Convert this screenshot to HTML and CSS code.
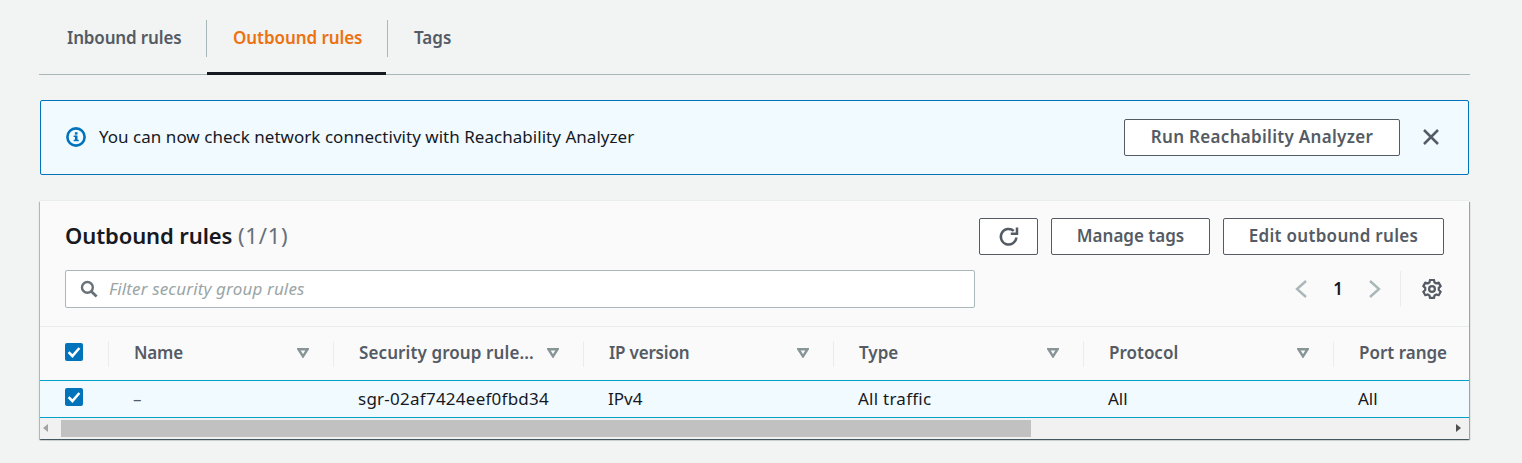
FILE: index.html
```html
<!DOCTYPE html>
<html lang="en">
<head>
<meta charset="utf-8">
<title>Outbound rules</title>
<link rel="stylesheet" href="styles.css">
</head>
<body>
<main class="page">
  <nav class="tabs">
    <a class="tab">Inbound rules</a>
    <a class="tab tab-active">Outbound rules</a>
    <a class="tab tab-last">Tags</a>
  </nav>

  <section class="banner">
    <svg class="info-icon" viewBox="0 0 20 20" width="20" height="20"><circle cx="10" cy="10" r="8.6" fill="none" stroke="#0073bb" stroke-width="2.6"/><rect x="8.9" y="8.6" width="2.6" height="5.2" fill="#0073bb"/><rect x="7.6" y="8.6" width="3" height="1.4" fill="#0073bb"/><rect x="7.6" y="12.8" width="5.2" height="1.4" fill="#0073bb"/><rect x="8.9" y="5.2" width="2.6" height="2.4" fill="#0073bb"/></svg>
    <span class="banner-text">You can now check network connectivity with Reachability Analyzer</span>
    <button class="btn btn-run"><span class="btn-label">Run Reachability Analyzer</span></button>
    <svg class="close-icon" viewBox="0 0 18 18" width="18" height="18"><path d="M2 2 16 16M16 2 2 16" fill="none" stroke="#545b64" stroke-width="2.5"/></svg>
  </section>

  <section class="card">
    <header class="card-head">
      <div class="head-row">
        <h2 class="title">Outbound rules <span class="count">(1/1)</span></h2>
        <div class="actions">
          <button class="btn btn-icon"><svg viewBox="0 0 22 22" width="22" height="22"><path d="M18.4 11.5A7.8 7.8 0 1 1 15.8 4.9" fill="none" stroke="#545b64" stroke-width="2.5"/><path d="M19 1.6V7.8H12.8" fill="none" stroke="#545b64" stroke-width="2.5"/></svg></button>
          <button class="btn btn-tags"><span class="btn-label">Manage tags</span></button>
          <button class="btn btn-edit"><span class="btn-label">Edit outbound rules</span></button>
        </div>
      </div>
      <div class="filter-row">
        <div class="filter">
          <svg viewBox="0 0 18 18" width="18" height="18"><circle cx="7.4" cy="7.4" r="5.4" fill="none" stroke="#687078" stroke-width="2.4"/><path d="M11.4 11.4 16.6 16.6" stroke="#687078" stroke-width="2.8"/></svg>
          <span class="placeholder">Filter security group rules</span>
        </div>
        <div class="pager">
          <svg class="chev" viewBox="0 0 12 18" width="12" height="18"><path d="M11 1 2 9l9 8" fill="none" stroke="#aab7b8" stroke-width="2.4"/></svg>
          <span class="page-num">1</span>
          <svg class="chev" viewBox="0 0 12 18" width="12" height="18"><path d="M1 1l9 8-9 8" fill="none" stroke="#aab7b8" stroke-width="2.4"/></svg>
          <span class="pager-sep"></span>
          <svg class="gear" viewBox="1 1 18 18" width="20" height="20"><path d="M8.2 1.9h3.6l.5 2.2 1.6.9 2.1-.7 1.8 3.1-1.7 1.6v1.9l1.7 1.6-1.8 3.1-2.1-.7-1.6.9-.5 2.2H8.2l-.5-2.2-1.6-.9-2.1.7-1.8-3.1 1.7-1.6V9L2.2 7.4 4 4.3l2.1.7 1.6-.9z" fill="none" stroke="#545b64" stroke-width="2" stroke-linejoin="round"/><circle cx="10" cy="10" r="2.6" fill="none" stroke="#545b64" stroke-width="2"/></svg>
        </div>
      </div>
    </header>

    <div class="table-wrap">
      <div class="row row-head">
        <div class="cell cell-check"><span class="check"><svg viewBox="0 0 18 18" width="18" height="18"><path d="M3.6 9.2 7.4 13l7-8" fill="none" stroke="#fff" stroke-width="2.6"/></svg></span></div>
        <div class="cell col-name"><span class="th th-tight">Name</span><svg class="sort" viewBox="0 0 12 10" width="12" height="10"><path d="M1.4 1.2h9.2L6 8.4z" fill="none" stroke="#879596" stroke-width="2.4"/></svg></div>
        <div class="cell col"><span class="th th-wide">Security group rule...</span><svg class="sort" viewBox="0 0 12 10" width="12" height="10"><path d="M1.4 1.2h9.2L6 8.4z" fill="none" stroke="#879596" stroke-width="2.4"/></svg></div>
        <div class="cell col"><span class="th th-tight">IP version</span><svg class="sort" viewBox="0 0 12 10" width="12" height="10"><path d="M1.4 1.2h9.2L6 8.4z" fill="none" stroke="#879596" stroke-width="2.4"/></svg></div>
        <div class="cell col"><span class="th">Type</span><svg class="sort" viewBox="0 0 12 10" width="12" height="10"><path d="M1.4 1.2h9.2L6 8.4z" fill="none" stroke="#879596" stroke-width="2.4"/></svg></div>
        <div class="cell col"><span class="th">Protocol</span><svg class="sort" viewBox="0 0 12 10" width="12" height="10"><path d="M1.4 1.2h9.2L6 8.4z" fill="none" stroke="#879596" stroke-width="2.4"/></svg></div>
        <div class="cell col"><span class="th">Port range</span></div>
      </div>
      <div class="row row-body">
        <div class="cell cell-check"><span class="check"><svg viewBox="0 0 18 18" width="18" height="18"><path d="M3.6 9.2 7.4 13l7-8" fill="none" stroke="#fff" stroke-width="2.6"/></svg></span></div>
        <div class="cell col-name"><span class="td td-dash">–</span></div>
        <div class="cell col"><span class="td td-id">sgr-02af7424eef0fbd34</span></div>
        <div class="cell col"><span class="td">IPv4</span></div>
        <div class="cell col"><span class="td td-wide">All traffic</span></div>
        <div class="cell col"><span class="td">All</span></div>
        <div class="cell col"><span class="td">All</span></div>
      </div>
      <div class="scrollbar">
        <span class="arrow arrow-left"></span>
        <div class="track"><span class="thumb"></span></div>
        <span class="arrow arrow-right"></span>
      </div>
    </div>
  </section>
</main>
</body>
</html>
```

FILE: styles.css
```css
* { box-sizing: border-box; }
html, body { margin: 0; height: 100%; }
body {
  background: #f2f3f3;
  color: #16191f;
  font-family: "Noto Sans", "Open Sans", sans-serif;
  font-size: 17px;
  overflow: hidden;
}
.page { padding: 0 52px 0 39px; width: 1522px; }

/* tabs */
.tabs {
  display: flex;
  height: 75px;
  width: 1431px;
  padding-top: 20px;
  border-bottom: 1px solid #aab7b8;
}
.tab {
  height: 54px;
  padding: 5px 0 0;
  color: #545b64;
  font-weight: 600;
  line-height: 26px;
  position: relative;
}
.tab:nth-child(1) { width: 168px; padding-left: 28px; letter-spacing: -.15px; }
.tab:nth-child(2) { width: 180px; padding-left: 26px; letter-spacing: -.07px; }
.tab:nth-child(3) { padding-left: 27px; }
.tab:nth-child(2)::before, .tab:nth-child(3)::before {
  content: "";
  position: absolute;
  left: 0;
  top: 0;
  width: 1px;
  height: 37px;
  background: #aab7b8;
}
.tab:nth-child(2)::before { left: -1px; }
.tab-active { color: #ec7211; }
.tab-active::after {
  content: "";
  position: absolute;
  left: 0;
  right: 1px;
  bottom: -1px;
  height: 3px;
  background: #16191f;
}

/* banner */
.banner {
  display: flex;
  align-items: center;
  margin: 25px 0 0 1px;
  width: 1429px;
  height: 75px;
  padding: 0 28px 0 25px;
  background: #f1faff;
  border: 1px solid #0073bb;
  border-radius: 2px;
}
.info-icon { flex: none; margin-bottom: 2px; }
.banner-text { margin-left: 13px; flex: 1; line-height: 22px; padding-bottom: 2px; letter-spacing: .03px; }
.btn {
  height: 37px;
  background: #fff;
  border: 1px solid #545b64;
  border-radius: 2px;
  color: #545b64;
  font: 600 17px "Noto Sans", "Open Sans", sans-serif;
  padding: 0;
  display: inline-flex;
  align-items: center;
  justify-content: center;
}
.btn-label { padding-bottom: 2px; letter-spacing: .3px; }
.btn-run { width: 276px; }
.close-icon { margin: 0 0 1px 22px; flex: none; }

/* card */
.card {
  margin: 26px 0 0 1px;
  width: 1429px;
  height: 238px;
  background: #fff;
  box-shadow: 0 1px 1px 0 rgba(0,28,36,.5), 1px 1px 1px 0 rgba(0,28,36,.3), -1px 1px 1px 0 rgba(0,28,36,.2), 0 -1px 0 0 #eaeded;
  overflow: hidden;
}
.card-head {
  background: #fafafa;
  height: 126px;
  border-bottom: 1px solid #eaeded;
  padding: 17px 25px 0;
}
.head-row { display: flex; justify-content: space-between; align-items: center; height: 37px; }
.title { margin: 0 0 4px; font-size: 22px; font-weight: 600; line-height: 34px; letter-spacing: -.1px; color: #16191f; }
.count { font-weight: 400; color: #687078; letter-spacing: .8px; }
.actions { display: flex; gap: 13px; }
.btn-icon { width: 59px; }
.btn-tags { width: 159px; }
.btn-tags .btn-label { letter-spacing: 0; }
.btn-edit { width: 221px; }
.filter-row { display: flex; align-items: center; margin-top: 15px; }
.filter {
  display: flex;
  align-items: center;
  flex: none;
  width: 910px;
  height: 38px;
  background: #fff;
  border: 1px solid #aab7b8;
  border-radius: 2px;
  padding-left: 14px;
}
.placeholder { margin-left: 11px; padding-bottom: 2px; font-style: italic; color: #9aa5a6; letter-spacing: .15px; }
.pager { display: flex; align-items: center; height: 38px; margin-left: 320px; }
.chev { flex: none; }
.page-num { width: 62px; text-align: center; font-weight: 600; color: #16191f; padding-bottom: 2px; }
.pager-sep { width: 1px; height: 36px; background: #eaeded; margin: 0 21px 0 19px; }
.gear { flex: none; }

/* table */
.table-wrap { overflow: hidden; background: #fff; }
.row { display: flex; width: 1600px; }
.row-head { height: 53px; background: #fafafa; align-items: center; }
.row-body {
  height: 38px;
  align-items: center;
  background: #f1faff;
  border-top: 1px solid #00a1c9;
  border-bottom: 1px solid #00a1c9;
  width: 1429px;
  overflow: hidden;
}
.cell { flex: none; display: flex; align-items: center; position: relative; height: 26px; }
.cell-check { width: 68px; padding-left: 25px; }
.col-name { width: 225px; padding: 0 24px 0 26px; justify-content: space-between; }
.col { width: 250px; padding: 0 24px 0 26px; justify-content: space-between; }
.row-head .col-name::before, .row-head .col::before {
  content: "";
  position: absolute;
  left: 0;
  top: 0;
  width: 1px;
  height: 26px;
  background: #eaeded;
}
.row-body .col-name { padding-left: 25px; }
.row-body .col { padding-left: 25px; }
.th { font-weight: 600; color: #545b64; white-space: nowrap; padding-bottom: 2px; }
.th-tight { letter-spacing: -.2px; }
.th-wide { letter-spacing: .1px; }
.td { color: #16191f; white-space: nowrap; padding-bottom: 2px; }
.td-dash { color: #545b64; }
.td-id { letter-spacing: .25px; }
.td-wide { letter-spacing: .25px; }
.sort { flex: none; margin-bottom: 1px; }
.check {
  display: block;
  width: 18px;
  height: 18px;
  margin-bottom: 4px;
  background: #0073bb;
  border-radius: 2px;
}
.check svg { display: block; }

/* scrollbar */
.scrollbar {
  display: flex;
  align-items: center;
  height: 21px;
  background: #f1f1f1;
  padding: 2px 0;
}
.arrow { flex: none; width: 21px; height: 17px; position: relative; }
.arrow::after {
  content: "";
  position: absolute;
  top: 4px;
  border-style: solid;
  border-width: 4px 5px;
  border-color: transparent;
}
.arrow-left::after { left: 3px; border-right-color: #a3a3a3; border-left-width: 0; }
.arrow-right::after { right: 8px; border-left-color: #505050; border-right-width: 0; }
.track { flex: 1; height: 17px; }
.thumb { display: block; width: 970px; height: 17px; background: #c1c1c1; }
```
